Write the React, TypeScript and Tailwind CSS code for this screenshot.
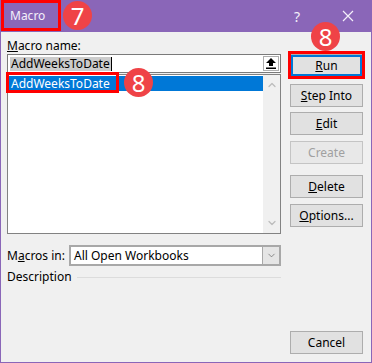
import { ChevronDown, ChevronUp } from "lucide-react";

function Btn({ children, disabled = false, className = "" }: { children: React.ReactNode; disabled?: boolean; className?: string }) {
    return (
        <div
            className={`h-[23px] flex items-center justify-center border ${disabled ? "text-[#a0a0a0] border-[#c4c4c4] bg-[#e8e8e8]" : "text-black border-[#adadad] bg-[#e1e1e1]"} ${className}`}
        >
            {children}
        </div>
    );
}

function Badge({ n, className }: { n: string; className: string }) {
    return (
        <div className={`absolute w-[29px] h-[29px] rounded-full bg-[#ef4347] text-white text-[24px] leading-none flex items-center justify-center ${className}`}>
            {n}
        </div>
    );
}

export default function App() {
    return (
        <div className="w-[372px] h-[363px] bg-[#f0f0f0] border border-t-0 border-[#8a66b8] flex flex-col relative font-['Noto_Sans',sans-serif] text-[12px] text-black overflow-hidden">

            {/* TITLE BAR */}
            <div className="h-[32px] bg-[#8a66b8] flex items-center text-[#f4f0fa] shrink-0">
                <span className="pl-[9px] text-[12px]">Macro</span>
                <span className="ml-auto mr-[42px] text-[14px]">?</span>
                <svg width="12" height="12" viewBox="0 0 12 12" className="mr-[17px]">
                    <path d="M1 1 L11 11 M11 1 L1 11" stroke="#f4f0fa" strokeWidth="1.2" />
                </svg>
            </div>

            {/* BODY */}
            <div className="flex-1 flex pl-[6px] pr-[8px] pb-[8px]">

                {/* LEFT */}
                <div className="w-[274px] flex flex-col pt-[6px]">
                    <div className="h-[16px] leading-[16px]">
                        <span className="underline">M</span>acro name:
                    </div>

                    <div className="h-[19px] bg-white border border-[#7a7a7a] flex items-center">
                        <span className="ml-[2px] bg-[#cccccc] leading-[14px] px-[1px]">AddWeeksToDate</span>
                        <span className="w-px h-[14px] bg-black" />
                        <div className="ml-auto mr-[1px] w-[16px] h-[15px] bg-white border border-[#adadad] flex items-center justify-center">
                            <svg width="10" height="11" viewBox="0 0 10 11">
                                <path d="M5 0 L10 5 L7 5 L7 8 L3 8 L3 5 L0 5 Z" fill="#000" />
                                <rect x="0" y="9.5" width="10" height="1.5" fill="#000" />
                            </svg>
                        </div>
                    </div>

                    <div className="mt-[1px] h-[160px] bg-white border border-[#828282] flex">
                        <div className="flex-1 pt-[1px]">
                            <div className="h-[15px] bg-[#0078d7] text-white leading-[15px] pl-[3px]">
                                AddWeeksToDate
                            </div>
                        </div>
                        <div className="w-[17px] bg-[#f0f0f0] flex flex-col items-center justify-between py-[4px] text-[#bcbcbc]">
                            <ChevronUp size={12} strokeWidth={2.5} />
                            <ChevronDown size={12} strokeWidth={2.5} />
                        </div>
                    </div>

                    <div className="mt-[11px] h-[21px] flex items-center">
                        <span className="w-[62px]">
                            M<span className="underline">a</span>cros in:
                        </span>
                        <div className="flex-1 h-[21px] bg-white border-2 border-[#a8a8a8] flex items-center">
                            <span className="pl-[3px]">All Open Workbooks</span>
                            <div className="ml-auto h-full w-[17px] bg-[#e5e5e5] border-l border-[#a8a8a8] flex items-center justify-center text-[#606060]">
                                <ChevronDown size={11} strokeWidth={1.5} />
                            </div>
                        </div>
                    </div>

                    <div className="mt-[3px] h-[16px] flex items-center">
                        <span>Description</span>
                        <div className="flex-1 ml-[5px] h-px bg-[#dcdcdc]" />
                    </div>
                </div>

                {/* RIGHT */}
                <div className="w-[73px] ml-[9px] flex flex-col pt-[22px]">
                    <Btn className="shadow-[inset_0_0_0_2px_#0078d7]">
                        <span className="underline">R</span>un
                    </Btn>
                    <Btn className="mt-[7px]">
                        <span className="underline">S</span>tep Into
                    </Btn>
                    <Btn className="mt-[5px]">
                        <span className="underline">E</span>dit
                    </Btn>
                    <Btn disabled className="mt-[6px]">Create</Btn>
                    <Btn className="mt-[11px]">
                        <span className="underline">D</span>elete
                    </Btn>
                    <Btn className="mt-[6px]">
                        <span className="underline">O</span>ptions...
                    </Btn>
                    <Btn className="mt-auto h-[22px]">Cancel</Btn>
                </div>
            </div>

            {/* ANNOTATIONS */}
            <div className="absolute left-0 top-0 w-[60px] h-[31px] border-[3px] border-[#ff0000]" />
            <Badge n="7" className="left-[62px] top-[1px]" />
            <div className="absolute left-[5px] top-[72px] w-[113px] h-[21px] border-[3px] border-[#ff0000]" />
            <Badge n="8" className="left-[123px] top-[68px]" />
            <div className="absolute left-[287px] top-[51px] w-[77px] h-[28px] border-[3px] border-[#ff0000]" />
            <Badge n="8" className="left-[310px] top-[22px]" />
        </div>
    );
}
